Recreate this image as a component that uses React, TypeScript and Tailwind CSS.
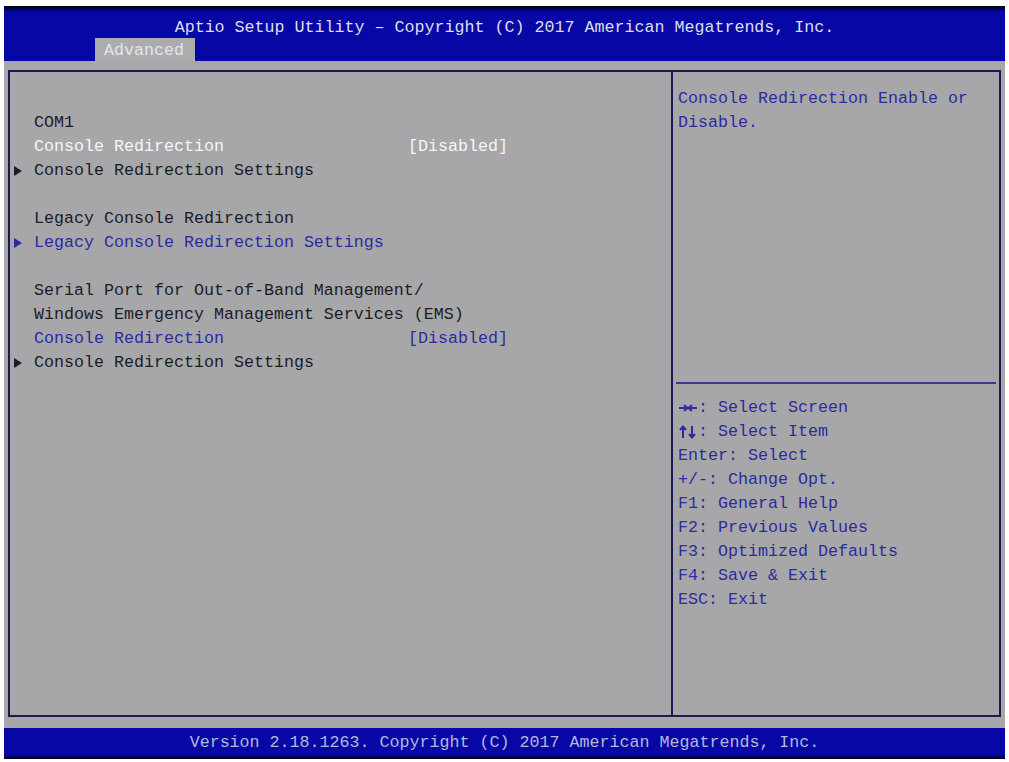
// Aptio BIOS setup screen — Advanced > serial port console redirection

const mono = "font-['Liberation_Mono','DejaVu_Sans_Mono',monospace] text-[16.67px] leading-[24px]"

type Row = {
  label?: string
  value?: string
  tone?: 'dark' | 'white' | 'blue'
  submenu?: boolean
}

const rows: Row[] = [
  { label: 'COM1', tone: 'dark' },
  { label: 'Console Redirection', value: '[Disabled]', tone: 'white' },
  { label: 'Console Redirection Settings', tone: 'dark', submenu: true },
  {},
  { label: 'Legacy Console Redirection', tone: 'dark' },
  { label: 'Legacy Console Redirection Settings', tone: 'blue', submenu: true },
  {},
  { label: 'Serial Port for Out-of-Band Management/', tone: 'dark' },
  { label: 'Windows Emergency Management Services (EMS)', tone: 'dark' },
  { label: 'Console Redirection', value: '[Disabled]', tone: 'blue' },
  { label: 'Console Redirection Settings', tone: 'dark', submenu: true },
]

const toneClass = {
  dark: 'text-[#1c1c26]',
  white: 'text-[#f6f6f6]',
  blue: 'text-[#2b2ba0]',
}

const arrowFill = {
  dark: '#1c1c26',
  white: '#f6f6f6',
  blue: '#2b2ba0',
}

const BLUE = '#2b2ba0'

function LeftRight() {
  return (
    <svg width="20" height="24" viewBox="0 0 20 24" className="shrink-0">
      <path d="M1 12 H9 M6 9 L9.5 12 L6 15" stroke={BLUE} strokeWidth="2" fill="none" />
      <path d="M19 12 H11 M14 9 L10.5 12 L14 15" stroke={BLUE} strokeWidth="2" fill="none" />
    </svg>
  )
}

function UpDown() {
  return (
    <svg width="20" height="24" viewBox="0 0 20 24" className="shrink-0">
      <path d="M5 18 V7 M2 10 L5 6.5 L8 10" stroke={BLUE} strokeWidth="2" fill="none" />
      <path d="M14 6 V17 M11 14 L14 17.5 L17 14" stroke={BLUE} strokeWidth="2" fill="none" />
    </svg>
  )
}

const help: [string, string][] = [
  ['lr', ': Select Screen'],
  ['ud', ': Select Item'],
  ['', 'Enter: Select'],
  ['', '+/-: Change Opt.'],
  ['', 'F1: General Help'],
  ['', 'F2: Previous Values'],
  ['', 'F3: Optimized Defaults'],
  ['', 'F4: Save & Exit'],
  ['', 'ESC: Exit'],
]

function MenuRow({ row }: { row: Row }) {
  if (!row.label) return <div className="h-[24px]" />
  const tone = row.tone ?? 'dark'
  return (
    <div className={`flex h-[24px] items-center ${toneClass[tone]}`}>
      <div className="flex w-[24px] shrink-0 items-center pl-[4px]">
        {row.submenu && (
          <svg width="8" height="10" viewBox="0 0 8 10">
            <path d="M0 0 L8 5 L0 10 Z" fill={arrowFill[tone]} />
          </svg>
        )}
      </div>
      <span className="w-[374px] shrink-0 whitespace-pre">{row.label}</span>
      {row.value && <span className="whitespace-pre">{row.value}</span>}
    </div>
  )
}

export default function App() {
  return (
    <div className={`h-[762px] w-[1009px] bg-white pt-[6px] px-[4px] ${mono}`}>
      <div className="flex h-[753px] w-[1001px] flex-col bg-[#a7a7a9]">
        {/* header */}
        <div className="flex h-[55px] flex-col bg-[#0707a6]">
          <div className="h-[6px] bg-gradient-to-b from-[#000010] to-[#0707a6]" />
          <div className="flex h-[26px] items-center justify-center pt-[6px] text-[#dedeea]">
            Aptio Setup Utility – Copyright (C) 2017 American Megatrends, Inc.
          </div>
          <div className="flex h-[23px] items-end pl-[91px]">
            <div className="flex h-[23px] w-[100px] items-center bg-[#acacae] pl-[9px] pt-[2px] text-[#e4e4ee]">
              Advanced
            </div>
          </div>
        </div>

        {/* body */}
        <div className="flex flex-1 flex-col px-[4px] pt-[9px] pb-[11px]">
          <div className="flex flex-1 border-2 border-[#1a1a52]">
            <div className="w-[661px] shrink-0 pt-[39px]">
              {rows.map((row, i) => (
                <MenuRow key={i} row={row} />
              ))}
            </div>
            <div className="flex flex-1 flex-col border-l-2 border-[#1a1a52]">
              <div className="h-[310px] pl-[5px] pt-[15px] text-[#2b2ba0]">
                <div>Console Redirection Enable or</div>
                <div>Disable.</div>
              </div>
              <div className="mx-[3px] h-[2px] bg-[#3a3a8a]" />
              <div className="pl-[5px] pt-[12px] text-[#2b2ba0]">
                {help.map(([keys, text]) => (
                  <div key={text} className="flex whitespace-pre">
                    {keys === 'lr' && <LeftRight />}
                    {keys === 'ud' && <UpDown />}
                    <span>{text}</span>
                  </div>
                ))}
              </div>
            </div>
          </div>
        </div>

        {/* footer */}
        <div className="flex h-[27px] items-center justify-center bg-[#0707a6] pt-[3px] text-[#b4b8dc]">
          Version 2.18.1263. Copyright (C) 2017 American Megatrends, Inc.
        </div>
        <div className="h-[4px] bg-gradient-to-b from-[#0707a6] to-[#000010]" />
      </div>
    </div>
  )
}
